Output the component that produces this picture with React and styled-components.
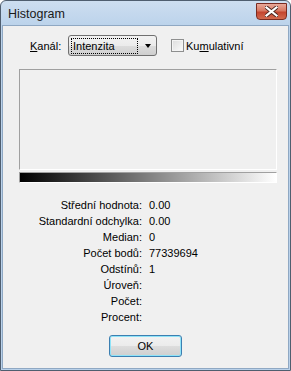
import React from 'react';
import styled, { createGlobalStyle } from 'styled-components';

const GlobalStyle = createGlobalStyle`
  html, body {
    margin: 0;
    padding: 0;
    background: #ffffff;
  }
  body {
    font-family: 'Liberation Sans', Arial, sans-serif;
  }
`;

const Window = styled.div`
  box-sizing: border-box;
  width: 291px;
  height: 371px;
  display: flex;
  flex-direction: column;
  border: 1px solid #4f5e6f;
  border-radius: 6px 6px 0 0;
  background: linear-gradient(#cddef0 0px, #bcd3eb 24px, #b9d1ea 100%);
  padding: 0 1px 1px 1px;
  overflow: hidden;
`;

const TitleBar = styled.div`
  height: 24px;
  flex: none;
  display: flex;
  align-items: center;
  justify-content: space-between;
  padding: 0 2px 0 6px;
  box-sizing: border-box;
`;

const Title = styled.span`
  font-size: 12.5px;
  color: #1a1a1a;
  margin-top: 1px;
`;

const CloseButton = styled.div`
  box-sizing: border-box;
  width: 31px;
  height: 17px;
  margin-top: -4px;
  border: 1px solid #7a2b21;
  border-radius: 0 0 4px 4px;
  background: linear-gradient(#e9a99a 0%, #d87862 45%, #c4452f 55%, #d26a4f 100%);
  display: flex;
  align-items: center;
  justify-content: center;
`;

const Client = styled.div`
  flex: 1;
  background: #f0f0f0;
  border: 1px solid #8fa8c3;
  display: flex;
  flex-direction: column;
  align-items: stretch;
  padding-top: 9px;
  font-size: 11px;
  color: #000;
`;

const TopRow = styled.div`
  display: flex;
  align-items: center;
  height: 21px;
  padding-left: 27px;
`;

const Label = styled.span`
  width: 38px;
`;

const Key = styled.span`
  text-decoration: underline;
`;

const Combo = styled.div`
  box-sizing: border-box;
  width: 89px;
  height: 21px;
  border: 1px solid #707070;
  border-radius: 3px;
  background: linear-gradient(#f2f2f2 0%, #ebebeb 50%, #dddddd 50%, #cfcfcf 100%);
  display: flex;
  align-items: center;
  padding: 0 2px;
`;

const ComboValue = styled.span`
  flex: none;
  width: 67px;
  height: 16px;
  box-sizing: border-box;
  border: 1px dotted #000;
  line-height: 14px;
  padding-left: 1px;
`;

const Arrow = styled.span`
  margin-left: 7px;
  width: 0;
  height: 0;
  border-left: 3.5px solid transparent;
  border-right: 3.5px solid transparent;
  border-top: 4px solid #000;
`;

const CheckBox = styled.span`
  box-sizing: border-box;
  width: 13px;
  height: 13px;
  margin-left: 14px;
  margin-right: 2px;
  border: 1px solid #8e8f8f;
  background: linear-gradient(135deg, #dcdcdc, #fbfbfb);
  box-shadow: inset 0 0 0 1px #f4f4f4;
`;

const Plot = styled.div`
  box-sizing: border-box;
  margin: 13px 0 0 16px;
  width: 258px;
  height: 101px;
  border: 1px solid;
  border-color: #a0a0a0 #ffffff #ffffff #a0a0a0;
`;

const GradientBar = styled.div`
  box-sizing: border-box;
  margin: 2px 0 0 16px;
  width: 258px;
  height: 11px;
  border: 1px solid;
  border-color: #a0a0a0 #ffffff #ffffff #a0a0a0;
  background: linear-gradient(to right, #000000, #ffffff);
`;

const Stats = styled.div`
  display: grid;
  grid-template-columns: 139px 1fr;
  column-gap: 7px;
  margin-top: 14px;
  grid-auto-rows: 16px;
  align-items: center;
`;

const StatLabel = styled.span`
  text-align: right;
`;

const StatValue = styled.span``;

const Footer = styled.div`
  display: flex;
  justify-content: center;
  margin-top: 10px;
`;

const OkButton = styled.div`
  box-sizing: border-box;
  width: 73px;
  height: 22px;
  border: 1px solid #3c7fb1;
  border-radius: 3px;
  box-shadow: inset 0 0 0 1px #8fe3f8;
  background: linear-gradient(#f2f2f2 0%, #ebebeb 50%, #dddddd 50%, #cfcfcf 100%);
  display: flex;
  align-items: center;
  justify-content: center;
`;

const stats = [
  ['Střední hodnota:', '0.00'],
  ['Standardní odchylka:', '0.00'],
  ['Median:', '0'],
  ['Počet bodů:', '77339694'],
  ['Odstínů:', '1'],
  ['Úroveň:', ''],
  ['Počet:', ''],
  ['Procent:', ''],
];

export default function App() {
  return (
    <>
      <GlobalStyle />
      <Window>
        <TitleBar>
          <Title>Histogram</Title>
          <CloseButton>
            <svg width="13" height="11" viewBox="0 0 13 11">
              <path
                d="M1.5 1.5 L11.5 9.5 M11.5 1.5 L1.5 9.5"
                stroke="#4a2620"
                strokeWidth="4"
                strokeLinecap="square"
              />
              <path
                d="M1.5 1.5 L11.5 9.5 M11.5 1.5 L1.5 9.5"
                stroke="#ffffff"
                strokeWidth="2.2"
                strokeLinecap="square"
              />
            </svg>
          </CloseButton>
        </TitleBar>
        <Client>
          <TopRow>
            <Label>
              <Key>K</Key>anál:
            </Label>
            <Combo>
              <ComboValue>Intenzita</ComboValue>
              <Arrow />
            </Combo>
            <CheckBox />
            <span>
              Ku<Key>m</Key>ulativní
            </span>
          </TopRow>
          <Plot />
          <GradientBar />
          <Stats>
            {stats.map(([label, value]) => (
              <React.Fragment key={label}>
                <StatLabel>{label}</StatLabel>
                <StatValue>{value}</StatValue>
              </React.Fragment>
            ))}
          </Stats>
          <Footer>
            <OkButton>OK</OkButton>
          </Footer>
        </Client>
      </Window>
    </>
  );
}
